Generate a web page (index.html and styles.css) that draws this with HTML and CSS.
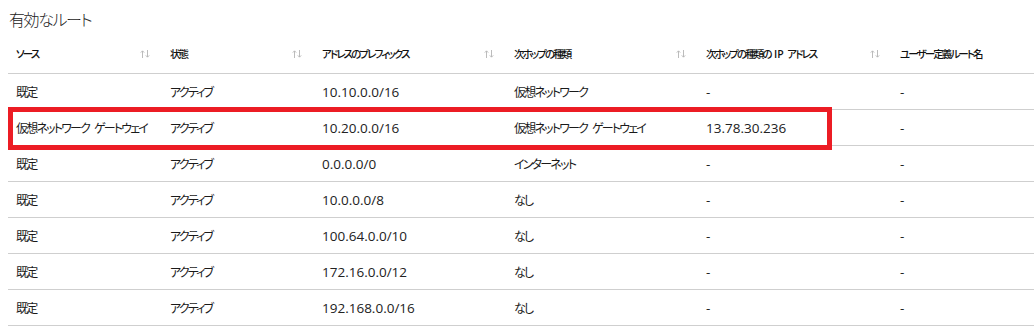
FILE: index.html
```html
<!DOCTYPE html>
<html lang="ja">
<head>
<meta charset="utf-8">
<link rel="stylesheet" href="styles.css">
</head>
<body>
<div class="page">
  <h1 class="title">有効なルート</h1>
  <div class="table-wrap">
    <table class="routes">
      <colgroup>
        <col class="c1"><col class="c2"><col class="c3"><col class="c4"><col class="c5"><col class="c6">
      </colgroup>
      <thead>
        <tr>
          <th><div class="th-in"><span>ソース</span><svg class="sort" viewBox="0 0 10 8"><path d="M2.5 8V1M0.8 2.6L2.5 0.8 4.2 2.6M7.5 0V7M5.8 5.4L7.5 7.2 9.2 5.4"/></svg></div></th>
          <th><div class="th-in"><span>状態</span><svg class="sort" viewBox="0 0 10 8"><path d="M2.5 8V1M0.8 2.6L2.5 0.8 4.2 2.6M7.5 0V7M5.8 5.4L7.5 7.2 9.2 5.4"/></svg></div></th>
          <th><div class="th-in"><span>アドレスのプレフィックス</span><svg class="sort" viewBox="0 0 10 8"><path d="M2.5 8V1M0.8 2.6L2.5 0.8 4.2 2.6M7.5 0V7M5.8 5.4L7.5 7.2 9.2 5.4"/></svg></div></th>
          <th><div class="th-in"><span>次ホップの種類</span><svg class="sort" viewBox="0 0 10 8"><path d="M2.5 8V1M0.8 2.6L2.5 0.8 4.2 2.6M7.5 0V7M5.8 5.4L7.5 7.2 9.2 5.4"/></svg></div></th>
          <th><div class="th-in"><span>次ホップの種類の <span class="lat">IP</span> アドレス</span><svg class="sort" viewBox="0 0 10 8"><path d="M2.5 8V1M0.8 2.6L2.5 0.8 4.2 2.6M7.5 0V7M5.8 5.4L7.5 7.2 9.2 5.4"/></svg></div></th>
          <th><div class="th-in"><span>ユーザー定義ルート名</span></div></th>
        </tr>
      </thead>
      <tbody>
        <tr><td>既定</td><td>アクティブ</td><td class="num">10.10.0.0/16</td><td>仮想ネットワーク</td><td class="num">-</td><td class="num">-</td></tr>
        <tr><td>仮想ネットワーク ゲートウェイ</td><td>アクティブ</td><td class="num">10.20.0.0/16</td><td>仮想ネットワーク ゲートウェイ</td><td class="num">13.78.30.236</td><td class="num">-</td></tr>
        <tr><td>既定</td><td>アクティブ</td><td class="num">0.0.0.0/0</td><td>インターネット</td><td class="num">-</td><td class="num">-</td></tr>
        <tr><td>既定</td><td>アクティブ</td><td class="num">10.0.0.0/8</td><td>なし</td><td class="num">-</td><td class="num">-</td></tr>
        <tr><td>既定</td><td>アクティブ</td><td class="num">100.64.0.0/10</td><td>なし</td><td class="num">-</td><td class="num">-</td></tr>
        <tr><td>既定</td><td>アクティブ</td><td class="num">172.16.0.0/12</td><td>なし</td><td class="num">-</td><td class="num">-</td></tr>
        <tr><td>既定</td><td>アクティブ</td><td class="num">192.168.0.0/16</td><td>なし</td><td class="num">-</td><td class="num">-</td></tr>
      </tbody>
    </table>
    <div class="highlight"></div>
  </div>
</div>
</body>
</html>
```

FILE: styles.css
```css
html, body {
  margin: 0;
  padding: 0;
  background: #ffffff;
}
body {
  font-family: "Noto Sans CJK JP", "Open Sans", sans-serif;
  font-feature-settings: "palt";
  color: #1a1a1a;
  width: 1034px;
  height: 335px;
  overflow: hidden;
}
.page {
  padding: 8px 0 0 8px;
}
.title {
  margin: 0;
  padding-left: 1px;
  font-size: 16px;
  font-weight: 300;
  letter-spacing: -1.4px;
  line-height: 22px;
  color: #222;
}
.table-wrap {
  position: relative;
  margin-top: 2px;
}
.routes {
  border-collapse: collapse;
  table-layout: fixed;
  width: 1026px;
}
.c1 { width: 154px; }
.c2 { width: 152px; }
.c3 { width: 192px; }
.c4 { width: 192px; }
.c5 { width: 194px; }
.c6 { width: 142px; }
.routes th {
  height: 41px;
  padding: 0 12px 0 8px;
  text-align: left;
  font-size: 10.5px;
  font-weight: 500;
  letter-spacing: -1.9px;
  word-spacing: 2px;
  color: #111;
  border-bottom: 1px solid #cfcfcf;
}
.th-in {
  display: flex;
  align-items: center;
  justify-content: space-between;
  padding-top: 2px;
}
.lat {
  font-family: "Open Sans", sans-serif;
  letter-spacing: 0;
  font-weight: 600;
  padding: 0 1px;
}
.sort {
  width: 10px;
  height: 8px;
  flex: none;
  fill: none;
  stroke: #b4b4b4;
  stroke-width: 0.9;
}
.routes td {
  height: 35px;
  padding: 0 8px;
  font-size: 12px;
  letter-spacing: -1.8px;
  word-spacing: 4px;
  color: #1a1a1a;
  border-bottom: 1px solid #cfcfcf;
  white-space: nowrap;
  overflow: hidden;
}
.routes td.num {
  font-family: "Open Sans", sans-serif;
  font-size: 13.5px;
  letter-spacing: 0;
  word-spacing: 0;
  color: #222;
}
.highlight {
  position: absolute;
  left: 0;
  top: 75px;
  width: 814px;
  height: 33px;
  border: 5px solid #ec1c24;
  pointer-events: none;
}
```
